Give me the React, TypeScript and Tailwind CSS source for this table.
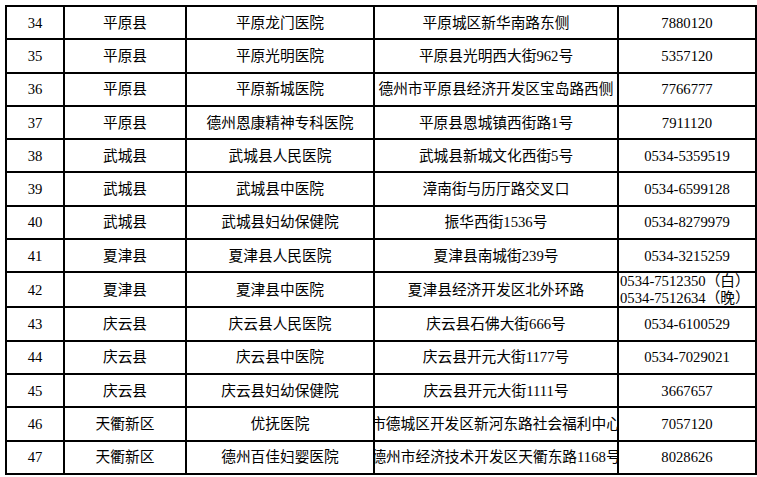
import React from "react";

type Row = {
  no: number;
  county: string;
  name: string;
  address: string;
  phone: string[];
};

const rows: Row[] = [
  { no: 34, county: "平原县", name: "平原龙门医院", address: "平原城区新华南路东侧", phone: ["7880120"] },
  { no: 35, county: "平原县", name: "平原光明医院", address: "平原县光明西大街962号", phone: ["5357120"] },
  { no: 36, county: "平原县", name: "平原新城医院", address: "德州市平原县经济开发区宝岛路西侧", phone: ["7766777"] },
  { no: 37, county: "平原县", name: "德州恩康精神专科医院", address: "平原县恩城镇西街路1号", phone: ["7911120"] },
  { no: 38, county: "武城县", name: "武城县人民医院", address: "武城县新城文化西街5号", phone: ["0534-5359519"] },
  { no: 39, county: "武城县", name: "武城县中医院", address: "漳南街与历厅路交叉口", phone: ["0534-6599128"] },
  { no: 40, county: "武城县", name: "武城县妇幼保健院", address: "振华西街1536号", phone: ["0534-8279979"] },
  { no: 41, county: "夏津县", name: "夏津县人民医院", address: "夏津县南城街239号", phone: ["0534-3215259"] },
  { no: 42, county: "夏津县", name: "夏津县中医院", address: "夏津县经济开发区北外环路", phone: ["0534-7512350（白）", "0534-7512634（晚）"] },
  { no: 43, county: "庆云县", name: "庆云县人民医院", address: "庆云县石佛大街666号", phone: ["0534-6100529"] },
  { no: 44, county: "庆云县", name: "庆云县中医院", address: "庆云县开元大街1177号", phone: ["0534-7029021"] },
  { no: 45, county: "庆云县", name: "庆云县妇幼保健院", address: "庆云县开元大街1111号", phone: ["3667657"] },
  { no: 46, county: "天衢新区", name: "优抚医院", address: "市德城区开发区新河东路社会福利中心", phone: ["7057120"] },
  { no: 47, county: "天衢新区", name: "德州百佳妇婴医院", address: "德州市经济技术开发区天衢东路1168号", phone: ["8028626"] },
];

const cell = "border-2 border-black text-center align-middle p-0 overflow-hidden whitespace-nowrap";

export default function App() {
  return (
    <div className="w-[757px] h-[477px] bg-white pl-[5px] pt-[5px]">
      <table
        className="table-fixed border-collapse w-[750px] text-[14.7px] text-black"
        style={{ fontFamily: '"Liberation Serif", "Noto Sans CJK SC", serif' }}
      >
        <colgroup>
          <col className="w-[58px]" />
          <col className="w-[122px]" />
          <col className="w-[188px]" />
          <col className="w-[244px]" />
          <col className="w-[138px]" />
        </colgroup>
        <tbody>
          {rows.map((r) => (
            <tr key={r.no} className="h-[33.3px]">
              <td className={cell}>{r.no}</td>
              <td className={cell}>{r.county}</td>
              <td className={cell}>{r.name}</td>
              <td className={cell}>
                <div className="flex justify-center overflow-hidden">
                  <span className="shrink-0">{r.address}</span>
                </div>
              </td>
              <td className={cell}>
                {r.phone.length > 1 ? (
                  <div className="flex flex-col items-start pl-[1px] leading-[16.5px]">
                    {r.phone.map((p) => (
                      <span key={p}>{p}</span>
                    ))}
                  </div>
                ) : (
                  r.phone[0]
                )}
              </td>
            </tr>
          ))}
        </tbody>
      </table>
    </div>
  );
}
